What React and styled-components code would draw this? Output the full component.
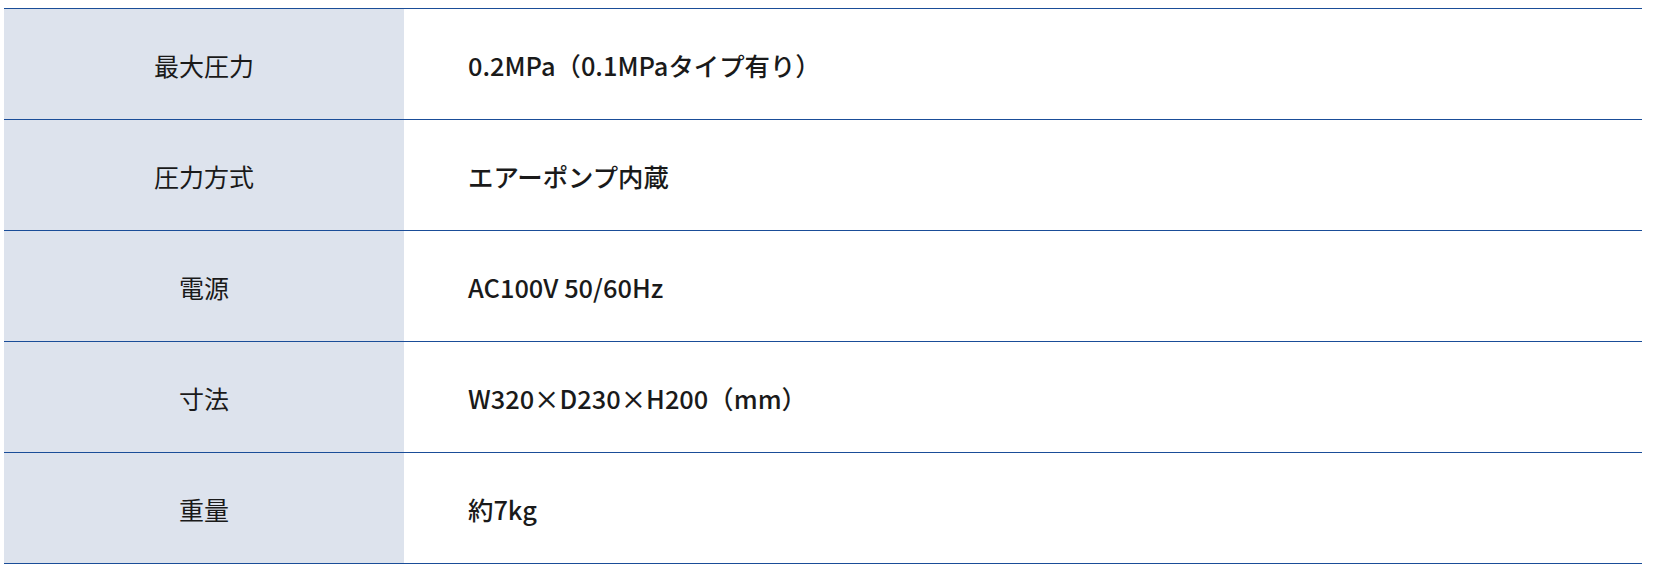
import React from 'react';
import styled, { createGlobalStyle } from 'styled-components';

const GlobalStyle = createGlobalStyle`
  body {
    margin: 0;
    background: #ffffff;
    font-family: "Noto Sans CJK JP", "Noto Sans", sans-serif;
    color: #1a1a1a;
  }
`;

const Wrapper = styled.div`
  padding: 8px 14px 0 4px;
`;

const SpecTable = styled.table`
  width: 1638px;
  border-collapse: collapse;
  border-top: 1px solid #1a4d98;
`;

const Row = styled.tr`
  height: 111px;
  border-bottom: 1px solid #1a4d98;
`;

const Head = styled.th`
  width: 400px;
  padding: 2px 0 0;
  background: #dde3ed;
  font-size: 25px;
  font-weight: 400;
  text-align: center;
  vertical-align: middle;
`;

const Value = styled.td`
  padding: 2px 0 0 64px;
  font-size: 25.4px;
  font-weight: 500;
  text-align: left;
  vertical-align: middle;
`;

const specs = [
  ['最大圧力', '0.2MPa（0.1MPaタイプ有り）'],
  ['圧力方式', 'エアーポンプ内蔵'],
  ['電源', 'AC100V 50/60Hz'],
  ['寸法', 'W320×D230×H200（mm）'],
  ['重量', '約7kg'],
];

export default function App() {
  return (
    <>
      <GlobalStyle />
      <Wrapper>
        <SpecTable>
          <tbody>
            {specs.map(([label, value]) => (
              <Row key={label}>
                <Head>{label}</Head>
                <Value>{value}</Value>
              </Row>
            ))}
          </tbody>
        </SpecTable>
      </Wrapper>
    </>
  );
}
